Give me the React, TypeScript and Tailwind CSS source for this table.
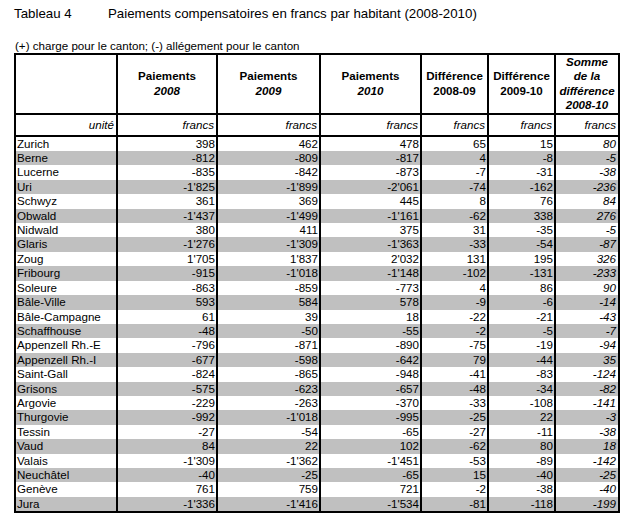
import React from "react";

type Row = [string, string, string, string, string, string, string];

const rows: Row[] = [
  ["Zurich", "398", "462", "478", "65", "15", "80"],
  ["Berne", "-812", "-809", "-817", "4", "-8", "-5"],
  ["Lucerne", "-835", "-842", "-873", "-7", "-31", "-38"],
  ["Uri", "-1'825", "-1'899", "-2'061", "-74", "-162", "-236"],
  ["Schwyz", "361", "369", "445", "8", "76", "84"],
  ["Obwald", "-1'437", "-1'499", "-1'161", "-62", "338", "276"],
  ["Nidwald", "380", "411", "375", "31", "-35", "-5"],
  ["Glaris", "-1'276", "-1'309", "-1'363", "-33", "-54", "-87"],
  ["Zoug", "1'705", "1'837", "2'032", "131", "195", "326"],
  ["Fribourg", "-915", "-1'018", "-1'148", "-102", "-131", "-233"],
  ["Soleure", "-863", "-859", "-773", "4", "86", "90"],
  ["Bâle-Ville", "593", "584", "578", "-9", "-6", "-14"],
  ["Bâle-Campagne", "61", "39", "18", "-22", "-21", "-43"],
  ["Schaffhouse", "-48", "-50", "-55", "-2", "-5", "-7"],
  ["Appenzell Rh.-E", "-796", "-871", "-890", "-75", "-19", "-94"],
  ["Appenzell Rh.-I", "-677", "-598", "-642", "79", "-44", "35"],
  ["Saint-Gall", "-824", "-865", "-948", "-41", "-83", "-124"],
  ["Grisons", "-575", "-623", "-657", "-48", "-34", "-82"],
  ["Argovie", "-229", "-263", "-370", "-33", "-108", "-141"],
  ["Thurgovie", "-992", "-1'018", "-995", "-25", "22", "-3"],
  ["Tessin", "-27", "-54", "-65", "-27", "-11", "-38"],
  ["Vaud", "84", "22", "102", "-62", "80", "18"],
  ["Valais", "-1'309", "-1'362", "-1'451", "-53", "-89", "-142"],
  ["Neuchâtel", "-40", "-25", "-65", "15", "-40", "-25"],
  ["Genève", "761", "759", "721", "-2", "-38", "-40"],
  ["Jura", "-1'336", "-1'416", "-1'534", "-81", "-118", "-199"],
];

const th = "border-2 border-black text-center align-middle font-bold leading-[14.4px] p-0";
const unit = "border-2 border-black text-right align-bottom italic leading-[14.4px] pr-[2px] pb-[2px]";
const td = "border-x-2 border-y-0 border-black text-right leading-[14.4px] p-0 pr-[1px]";

export default function App() {
  return (
    <div className="min-h-[518px] bg-white text-black font-['Liberation_Sans',Arial,sans-serif] pl-[14px] pt-[6px]">
      {/* titre */}
      <div className="flex text-[13.3px] leading-[16px]">
        <span className="w-[94px]">Tableau 4</span>
        <span>Paiements compensatoires en francs par habitant (2008-2010)</span>
      </div>
      <div className="mt-[17px] ml-[1px] text-[11.6px] leading-[14px]">
        (+) charge pour le canton; (-) allégement pour le canton
      </div>

      <table className="table-fixed border-collapse border-2 border-black w-[604px] text-[11.6px]">
        <colgroup>
          <col className="w-[102px]" />
          <col className="w-[100px]" />
          <col className="w-[103px]" />
          <col className="w-[101px]" />
          <col className="w-[67px]" />
          <col className="w-[67px]" />
          <col className="w-[64px]" />
        </colgroup>
        <thead>
          <tr className="h-[56px]">
            <th className={th}></th>
            <th className={th}>
              Paiements
              <br />
              <i>2008</i>
            </th>
            <th className={th}>
              Paiements
              <br />
              <i>2009</i>
            </th>
            <th className={th}>
              Paiements
              <br />
              <i>2010</i>
            </th>
            <th className={th}>
              Différence
              <br />
              2008-09
            </th>
            <th className={th}>
              Différence
              <br />
              2009-10
            </th>
            <th className={th + " italic"}>
              Somme
              <br />
              de la
              <br />
              différence
              <br />
              2008-10
            </th>
          </tr>
          <tr className="h-[22px] font-normal">
            <td className={unit}>unité</td>
            <td className={unit}>francs</td>
            <td className={unit}>francs</td>
            <td className={unit}>francs</td>
            <td className={unit}>francs</td>
            <td className={unit}>francs</td>
            <td className={unit}>francs</td>
          </tr>
        </thead>
        <tbody>
          {rows.map((r, i) => (
            <tr key={r[0]} className={i % 2 === 1 ? "h-[14.4px] bg-[#c0c0c0]" : "h-[14.4px] bg-white"}>
              <td className="border-x-2 border-y-0 border-black text-left leading-[14.4px] p-0 pl-[1px] whitespace-nowrap">
                {r[0]}
              </td>
              <td className={td}>{r[1]}</td>
              <td className={td}>{r[2]}</td>
              <td className={td}>{r[3]}</td>
              <td className={td}>{r[4]}</td>
              <td className={td}>{r[5]}</td>
              <td className={td + " italic pr-[2px]"}>{r[6]}</td>
            </tr>
          ))}
        </tbody>
      </table>
    </div>
  );
}
